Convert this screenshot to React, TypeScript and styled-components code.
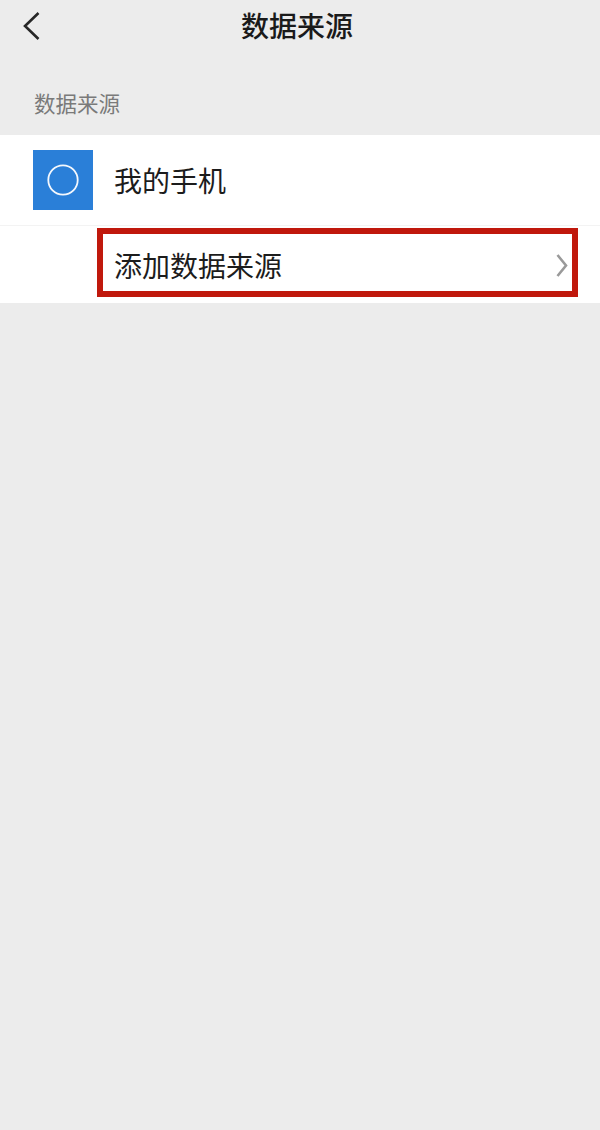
import styled, { createGlobalStyle } from 'styled-components';

const cjk = `"Noto Sans CJK SC", "Noto Sans", sans-serif`;

const GlobalStyle = createGlobalStyle`
    html, body {
        margin: 0;
        padding: 0;
        background: #ececec;
    }
    body {
        font-family: ${cjk};
    }
`;

export default function App() {
    return (
        <>
            <GlobalStyle />
            <Page>
                <NavBar>
                    <BackIcon width="20" height="30" viewBox="0 0 20 30">
                        <path d="M16.5 2 L3 15 L16.5 28" />
                    </BackIcon>
                    <NavTitle>数据来源</NavTitle>
                </NavBar>
                <SectionLabel>数据来源</SectionLabel>
                <List>
                    <DeviceRow>
                        <DeviceIcon>
                            <svg width="34" height="34" viewBox="0 0 34 34">
                                <circle
                                    cx="17"
                                    cy="17"
                                    r="14.7"
                                    fill="none"
                                    stroke="#f4f8fd"
                                    strokeWidth="1.8"
                                />
                            </svg>
                        </DeviceIcon>
                        <RowText>我的手机</RowText>
                    </DeviceRow>
                    <AddRow>
                        <Highlight>
                            <RowText>添加数据来源</RowText>
                            <Chevron width="12" height="24" viewBox="0 0 12 24">
                                <path d="M1.5 2 L10 12.5 L1.5 23" />
                            </Chevron>
                        </Highlight>
                    </AddRow>
                </List>
            </Page>
        </>
    );
}

const Page = styled.div`
    width: 600px;
    height: 1130px;
    background: #ececec;
    overflow: hidden;
`;

const NavBar = styled.div`
    height: 54px;
    display: flex;
    justify-content: center;
    position: relative;
`;

const BackIcon = styled.svg`
    position: absolute;
    left: 22px;
    top: 11px;
    fill: none;
    stroke: #262626;
    stroke-width: 2.6;
`;

const NavTitle = styled.div`
    font-size: 28px;
    line-height: 54px;
    font-weight: 500;
    color: #1a1a1a;
    margin: -2px 0 0 -6px;
`;

const SectionLabel = styled.div`
    height: 81px;
    padding: 34px 0 0 34px;
    box-sizing: border-box;
    font-size: 21.5px;
    line-height: 30px;
    color: #7a7a7a;
`;

const List = styled.div`
    background: #ffffff;
`;

const DeviceRow = styled.div`
    height: 91px;
    box-sizing: border-box;
    padding: 15px 0 0 33px;
    display: flex;
    align-items: flex-start;
    gap: 21px;
    border-bottom: 1px solid #f3f3f3;
`;

const DeviceIcon = styled.div`
    width: 60px;
    height: 60px;
    background: #2a7fd8;
    display: flex;
    align-items: center;
    justify-content: center;
`;

const RowText = styled.div`
    font-size: 28px;
    line-height: 60px;
    color: #1c1c1c;
`;

const AddRow = styled.div`
    height: 77px;
    box-sizing: border-box;
    padding: 2px 22px 0 97px;
`;

const Highlight = styled.div`
    height: 69px;
    box-sizing: border-box;
    border: 6px solid #c0180c;
    padding: 4px 4px 0 11px;
    display: flex;
    align-items: center;
    justify-content: space-between;
`;

const Chevron = styled.svg`
    fill: none;
    stroke: #9a9a9a;
    stroke-width: 2.6;
`;
